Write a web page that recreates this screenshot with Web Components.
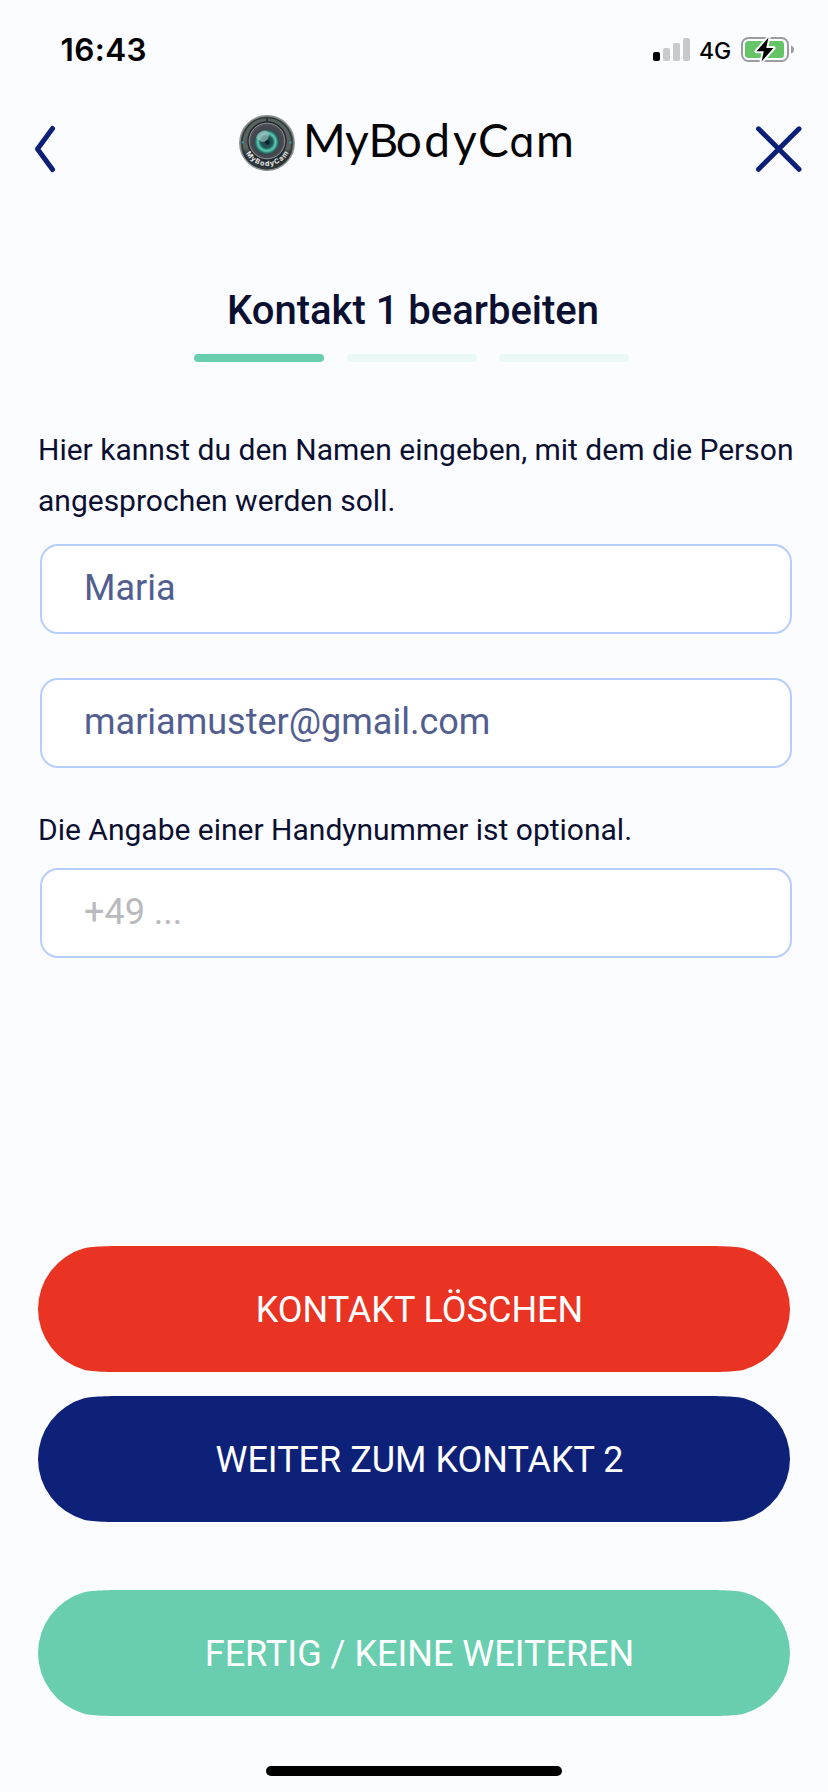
<!DOCTYPE html>
<html lang="de">
<head>
<meta charset="utf-8">
<title>MyBodyCam</title>
<style>
  html, body { margin: 0; background: #fbfcff; }
  body { font-family: Roboto, "Noto Sans", sans-serif; color: #0b1031; }
</style>
</head>
<body>
<contact-screen></contact-screen>
<script>
const define = (name, html) => {
  const template = document.createElement('template');
  template.innerHTML = html;
  customElements.define(name, class extends HTMLElement {
    constructor() {
      super();
      this.attachShadow({ mode: 'open' }).append(template.content.cloneNode(true));
    }
  });
};

define('status-bar', `
<style>
  :host { display: flex; justify-content: space-between; height: 100px; box-sizing: border-box; padding: 30px 33px 0 60.500px;
    font-family: Inter, sans-serif; color: #000; }
  time { font-size: 31.500px; line-height: 40px; font-weight: 600; letter-spacing: .4px; }
  .right { display: flex; height: 40px; }
  .net { font-size: 23px; line-height: 42px; font-weight: 500; width: 33px; margin: 0 8px 0 9px; letter-spacing: 0; }
  svg { display: block; }
</style>
<time>16:43</time>
<div class="right">
  <svg width="37" height="40"><g fill="#c8c9cb"><rect x="10" y="18" width="7" height="13" rx="2"/><rect x="20" y="13" width="7" height="18" rx="2"/><rect x="30" y="8" width="7" height="23" rx="2"/></g><rect y="22" width="7" height="9" rx="2"/></svg>
  <span class="net">4G</span>
  <svg width="55" height="40">
    <rect x="2" y="8" width="46" height="23" rx="6.500" fill="none" stroke="#9b9ca0" stroke-width="2"/>
    <rect x="5" y="11" width="39" height="17" rx="3.500" fill="#65c466"/>
    <path d="M51 15.500q3 1 3 4t-3 4z" fill="#9b9ca0"/>
    <path d="M28.500 7.500 16.500 21.300h7.300l-2.200 10.200L33.500 18h-7.300z" fill="#000" stroke="#fbfcff" stroke-width="4" stroke-linejoin="round" paint-order="stroke"/>
  </svg>
</div>`);

define('brand-logo', `
<style>:host { display: block; } svg { display: block; overflow: visible; }</style>
<svg width="340" height="66" viewBox="236 110 340 66">
  <defs>
    <linearGradient id="rim" x1="0" y1="0" x2="0" y2="1"><stop offset="0" stop-color="#58635f"/><stop offset=".6" stop-color="#59625f"/><stop offset=".72" stop-color="#252b2e"/><stop offset="1" stop-color="#30373b"/></linearGradient>
    <radialGradient id="glass"><stop offset="0" stop-color="#173d42"/><stop offset=".48" stop-color="#205a59"/><stop offset=".7" stop-color="#5ccfb6"/><stop offset=".86" stop-color="#327c74"/><stop offset="1" stop-color="#28434a"/></radialGradient>
    <path id="ring" d="M245 151.500a24 24 0 0 0 44 0"/>
  </defs>
  <circle cx="267" cy="143" r="27.200" fill="url(#rim)" stroke="#8c9294" stroke-width="1.500"/>
  <circle cx="267" cy="142.600" r="25" fill="none" stroke="#303839" stroke-width="1.400"/>
  <circle cx="267" cy="141" r="19" fill="#4c4f57" stroke="#22282c" stroke-width="1.500"/>
  <circle cx="267" cy="141" r="17.800" fill="none" stroke="#8b9092" stroke-width="1"/>
  <circle cx="267" cy="141.500" r="15.500" fill="#45474f"/>
  <circle cx="266.700" cy="142" r="12.600" fill="url(#glass)"/>
  <path d="M256 138q1-6 8-7.500q5 0 5 5-1 6-7 6.500z" fill="#a6c5c3" opacity=".65"/>
  <circle cx="267.500" cy="142.500" r="2.300" fill="#0c252b"/>
  <path d="M267 118v4" stroke="#20282a" stroke-width="1.500"/>
  <circle cx="243" cy="142.500" r="1" fill="#35a8da"/><circle cx="290.500" cy="142.500" r="1" fill="#35a8da"/>
  <text font-family="Inter, sans-serif" font-size="7" font-weight="700" fill="#e9ebeb"><textPath href="#ring" textLength="52" startOffset="2">MyBodyCam</textPath></text>
  <text y="157" font-family="Lato, sans-serif" font-size="46" fill="#050505" style="font-kerning:none" x="303 345 368.500 395.700 424.300 453 478 509.200 536">MyBodyC<tspan font-family="Inter, sans-serif" font-size="41" font-weight="400" style="font-feature-settings:'cv11' 1">a</tspan>m</text>
</svg>`);

define('app-header', `
<style>
  :host { display: flex; align-items: flex-start; justify-content: space-between; height: 180px; box-sizing: border-box; padding: 10px 24px 0 32px; }
  button { all: unset; display: block; margin-top: 13px; }
  brand-logo { margin-left: -1px; }
  svg { display: block; }
  path { fill: none; stroke: #0d2078; stroke-width: 5; stroke-linecap: round; stroke-linejoin: round; }
</style>
<button aria-label="Zurück"><svg width="28" height="52"><path d="M20.500 5.500 5.500 26 20.500 46.500"/></svg></button>
<brand-logo></brand-logo>
<button aria-label="Schließen"><svg width="51" height="52"><path d="m5.500 5.800 40.500 40.500m0-40.500L5.500 46.300"/></svg></button>`);

define('step-progress', `
<style>
  :host { display: flex; justify-content: center; gap: 22.500px; padding-right: 5px; }
  i { width: 130px; height: 8px; border-radius: 4px; background: #eaf8f6; }
  i.on { background: #69ceaf; }
</style><i class="on"></i><i></i><i></i>`);

define('text-field', `
<style>
  :host { display: flex; align-items: center; box-sizing: border-box; height: 90px; margin: 0 36px 0 40px; padding: 0 42px 2px;
    border: 2px solid #b7cdff; border-radius: 18px; background: #fff; color: #525d90; font-size: 36px; line-height: 42px; }
  :host([empty]) { color: #b9babd; }
</style><span><slot></slot></span>`);

define('pill-button', `
<style>
  :host { display: grid; height: 126px; margin: 0 38px; color: #fff; font-size: 36px; line-height: 42px; }
  svg, span { grid-area: 1 / 1; }
  svg { display: block; }
  path { fill: var(--pill); }
  span { align-self: center; justify-self: center; padding: 2px 0 0 11px; white-space: nowrap; }
</style>
<svg width="752" height="126"><path d="M96 0C76 0 54.400 0 46 2.340A63 63 0 0 0 0 63A63 63 0 0 0 46 123.660C54.400 126 76 126 96 126H656C676 126 697.600 126 706 123.660A63 63 0 0 0 752 63A63 63 0 0 0 706 2.340C697.600 0 676 0 656 0Z"/></svg>
<span><slot></slot></span>`);

define('contact-screen', `
<style>
  :host { display: flex; flex-direction: column; width: 828px; height: 1792px; overflow: hidden; }
  h1 { margin: 0; padding: 1px 2px 0 0; text-align: center; font-size: 40px; line-height: 60px; font-weight: 500; }
  step-progress { margin-top: 13px; }
  p { margin: 0 30px 0 38px; font-size: 30px; line-height: 51px; white-space: nowrap; }
  .intro { margin-top: 62px; margin-bottom: 18px; }
  .email { margin-top: 44px; }
  .hint { margin-top: 36px; margin-bottom: 13px; }
  .actions { display: flex; flex-direction: column; gap: 24px; margin-top: 288px; }
  .done { margin-top: 44px; }
  .home { width: 296px; height: 10px; border-radius: 5px; background: #000; margin: 50px auto 0; }
</style>
<status-bar></status-bar>
<app-header></app-header>
<h1>Kontakt 1 bearbeiten</h1>
<step-progress></step-progress>
<p class="intro">Hier kannst du den Namen eingeben, mit dem die Person<br>angesprochen werden soll.</p>
<text-field>Maria</text-field>
<text-field class="email">mariamuster@gmail.com</text-field>
<p class="hint">Die Angabe einer Handynummer ist optional.</p>
<text-field empty>+49 ...</text-field>
<div class="actions">
  <pill-button style="--pill:#e93423">KONTAKT LÖSCHEN</pill-button>
  <pill-button style="--pill:#0e2179">WEITER ZUM KONTAKT 2</pill-button>
  <pill-button class="done" style="--pill:#69ceaf">FERTIG / KEINE WEITEREN</pill-button>
</div>
<div class="home"></div>`);
</script>
</body>
</html>
